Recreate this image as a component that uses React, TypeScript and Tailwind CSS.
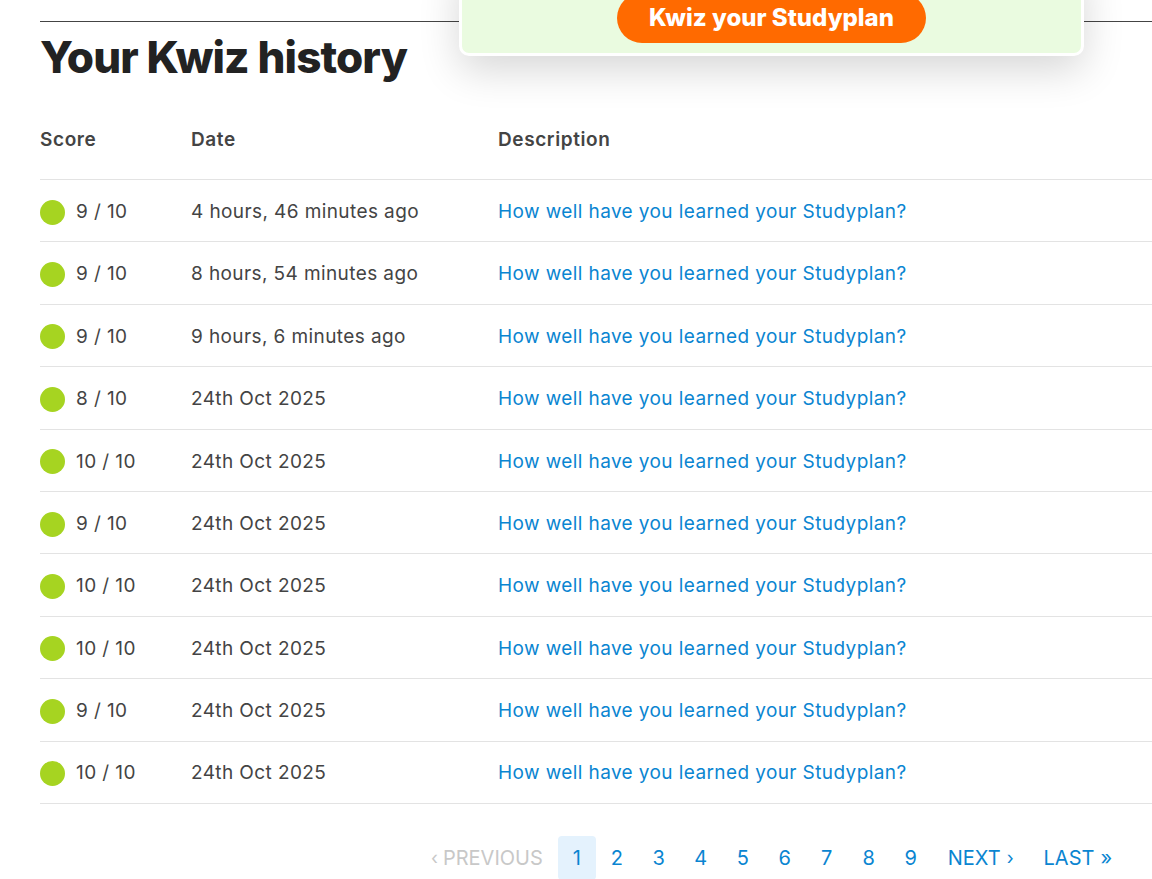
import React from "react";

const rows = [
  { score: "9 / 10", date: "4 hours, 46 minutes ago" },
  { score: "9 / 10", date: "8 hours, 54 minutes ago" },
  { score: "9 / 10", date: "9 hours, 6 minutes ago" },
  { score: "8 / 10", date: "24th Oct 2025" },
  { score: "10 / 10", date: "24th Oct 2025" },
  { score: "9 / 10", date: "24th Oct 2025" },
  { score: "10 / 10", date: "24th Oct 2025" },
  { score: "10 / 10", date: "24th Oct 2025" },
  { score: "9 / 10", date: "24th Oct 2025" },
  { score: "10 / 10", date: "24th Oct 2025" },
];

export default function App() {
  return (
    <div
      className="relative min-h-[879px] w-[1152px] overflow-hidden bg-white"
      style={{ fontFamily: "Inter, 'Noto Sans', sans-serif" }}
    >
      <div className="pl-10 pt-[21px]">
        <div className="h-px bg-[#444]" />
        <h1 className="mt-[10px] text-[44px] font-extrabold leading-[50px] tracking-[-0.02em] text-[#222]">
          Your Kwiz history
        </h1>

        <div className="mt-[28px]">
          <div className="flex h-[70px] items-center border-b border-[#e3e3e3] pb-[8px] text-[19px] font-semibold tracking-[0.6px] text-[#444]">
            <div className="w-[151px]">Score</div>
            <div className="w-[307px]">Date</div>
            <div>Description</div>
          </div>
          {rows.map((r, i) => (
            <div
              key={i}
              className="flex h-[62.4px] items-center border-b border-[#e3e3e3] pt-[3px] text-[19px] tracking-[0.4px] text-[#444]"
            >
              <div className="flex w-[151px] items-center gap-[11px]">
                <span className="inline-block h-[25px] w-[25px] rounded-full bg-[#a6d421]" />
                <span>{r.score}</span>
              </div>
              <div className="w-[307px]">{r.date}</div>
              <div className="text-[#0a85d1]">How well have you learned your Studyplan?</div>
            </div>
          ))}
        </div>

        <div className="mt-[32px] flex items-center text-[20px] uppercase">
          <div className="ml-[391px] flex items-center text-[#c8c8c8]">
            <span className="mr-[5px] text-[18px]">‹</span>PREVIOUS
          </div>
          <div className="ml-[15px] flex h-[44px] w-[38px] items-center justify-center rounded-[4px] bg-[#e4f2fd] text-[#0a85d1]">
            1
          </div>
          {["2", "3", "4", "5", "6", "7", "8", "9"].map((n) => (
            <div key={n} className="flex h-[44px] w-[42px] items-center justify-center text-[#0a85d1]">
              {n}
            </div>
          ))}
          <div className="ml-[16px] flex items-center text-[#0a85d1]">
            NEXT<span className="ml-[6px] text-[18px]">›</span>
          </div>
          <div className="ml-[30px] flex items-center text-[#0a85d1]">
            LAST<span className="ml-[6px]">»</span>
          </div>
        </div>
      </div>

      <div className="absolute left-[459px] top-[-40px] flex h-[96px] w-[625px] items-end justify-center rounded-[10px] border-[3px] border-white bg-[#eafbe0] pb-[10px] shadow-[0_14px_40px_rgba(0,0,0,0.16)]">
        <div className="flex h-[50px] w-[309px] items-center justify-center rounded-full bg-[#ff6a00] text-[24px] font-extrabold text-white">
          Kwiz your Studyplan
        </div>
      </div>
    </div>
  );
}
